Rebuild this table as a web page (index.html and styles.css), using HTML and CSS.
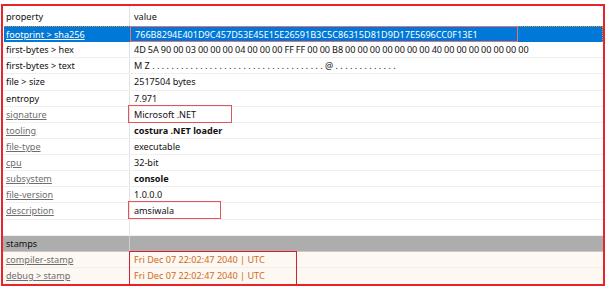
FILE: index.html
```html
<!DOCTYPE html>
<html>
<head>
<meta charset="utf-8">
<link rel="stylesheet" href="styles.css">
</head>
<body>
<div class="frame">
  <div class="row head"><div class="c p">property</div><div class="c v">value</div></div>
  <div class="row sel"><div class="c p"><span class="lnk">footprint &gt; sha256</span></div><div class="c v">766B8294E401D9C457D53E45E15E26591B3C5C86315D81D9D17E5696CC0F13E1<i class="mark m-hash"></i></div></div>
  <div class="row"><div class="c p">first-bytes &gt; hex</div><div class="c v hex">4D 5A 90 00 03 00 00 00 04 00 00 00 FF FF 00 00 B8 00 00 00 00 00 00 00 40 00 00 00 00 00 00 00</div></div>
  <div class="row"><div class="c p">first-bytes &gt; text</div><div class="c v">M Z . . . . . . . . . . . . . . . . . . . . . . . . . . . . . . . . . . . . @ . . . . . . . . . . . . .</div></div>
  <div class="row"><div class="c p">file &gt; size</div><div class="c v">2517504 bytes</div></div>
  <div class="row"><div class="c p">entropy</div><div class="c v">7.971</div></div>
  <div class="row"><div class="c p"><span class="lnk">signature</span></div><div class="c v">Microsoft .NET<i class="mark m-sig"></i></div></div>
  <div class="row"><div class="c p"><span class="lnk">tooling</span></div><div class="c v b">costura .NET loader</div></div>
  <div class="row"><div class="c p"><span class="lnk">file-type</span></div><div class="c v">executable</div></div>
  <div class="row"><div class="c p"><span class="lnk">cpu</span></div><div class="c v">32-bit</div></div>
  <div class="row"><div class="c p"><span class="lnk">subsystem</span></div><div class="c v b">console</div></div>
  <div class="row"><div class="c p"><span class="lnk">file-version</span></div><div class="c v">1.0.0.0</div></div>
  <div class="row"><div class="c p"><span class="lnk">description</span></div><div class="c v">amsiwala<i class="mark m-desc"></i></div></div>
  <div class="row"><div class="c p"></div><div class="c v"></div></div>
  <div class="row group"><div class="c p">stamps</div><div class="c v"></div></div>
  <div class="row stamp"><div class="c p"><span class="lnk">compiler-stamp</span></div><div class="c v">Fri Dec 07 22:02:47 2040 | UTC<i class="mark m-stamp"></i></div></div>
  <div class="row stamp last"><div class="c p"><span class="lnk">debug &gt; stamp</span></div><div class="c v">Fri Dec 07 22:02:47 2040 | UTC</div></div>
</div>
</body>
</html>
```

FILE: styles.css
```css
* { box-sizing: border-box; }
html, body { margin: 0; padding: 0; background: #fff; }
body {
  font-family: "Noto Sans", "Open Sans", sans-serif;
  font-size: 9.1px;
  color: #111;
}
.frame {
  margin: 4px 0 0 1px;
  width: 604px;
  border: 2px solid #e8232c;
  display: flex;
  flex-direction: column;
}
.row {
  display: grid;
  grid-template-columns: 127px 1fr;
  height: 16.125px;
  border-bottom: 1px solid #efefef;
}
.row.head { height: 20px; border-bottom: none; }
.row.last { border-bottom: none; }
.c {
  display: flex;
  align-items: center;
  white-space: nowrap;
  overflow: visible;
  min-width: 0;
}
.p { padding-left: 3px; border-right: 1px solid #e3e3e3; }
.v { padding-left: 4px; position: relative; }
.hex { word-spacing: -0.4px; }
.b { font-weight: bold; }
.lnk { color: #6e6e6e; text-decoration: underline; }
.sel {
  background: #0078d7;
  color: #fff;
  margin-left: 1px;
  border-top: 1px dotted #f08a24;
  border-right: 1px dotted #f08a24;
  border-bottom: none;
}
.sel .p { border-right-color: #0078d7; padding-left: 2px; }
.sel .lnk { color: #fff; }
.group { background: #adadad; border-bottom-color: #c9c9c9; }
.group .p { border-right-color: #cfcfcf; color: #111; }
.stamp { background: #fdf8f2; }
.stamp .v { color: #cf6a22; }
.mark {
  position: absolute;
  border: 1px solid #e4545c;
  pointer-events: none;
}
.m-hash { left: -1px; top: -1px; width: 388px; height: 16px; border-color: #e8707a; }
.m-sig { left: -2px; top: -2px; width: 104px; height: 18px; }
.m-desc { left: -2px; top: -2px; width: 93px; height: 18px; }
.m-stamp { left: -1px; top: -1px; width: 168px; height: 36px; border: 1.5px solid #d3202e; }
```
